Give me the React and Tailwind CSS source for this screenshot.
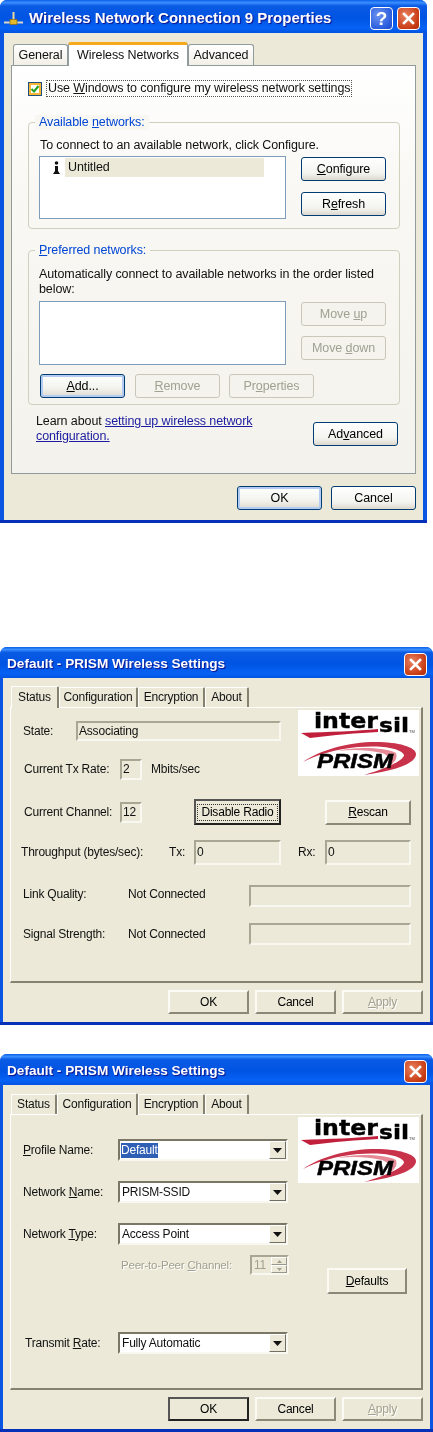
import React from "react";

const XpBtn = ({ w = "w-[85px]", kind = "normal", children }) => {
  const cls =
    kind === "disabled"
      ? "border-[#c9c7ba] bg-[#f4f3ee] text-[#a1a192]"
      : kind === "default"
      ? "border-[#003c74] bg-[linear-gradient(#fff,#f3f3ee_60%,#dcd8ce)] text-black shadow-[inset_0_0_0_2px_#b5ccf2]"
      : "border-[#003c74] bg-[linear-gradient(#fff,#f3f3ee_70%,#dcd8ce)] text-black";
  return (
    <div className={`${w} h-6 shrink-0 flex items-center justify-center rounded-[3px] border ${cls}`}>
      <span>{children}</span>
    </div>
  );
};

const Group = ({ title, h, children }) => (
  <div className={`relative ml-4 w-[372px] ${h} rounded-[4px] border border-[#d0d0bf]`}>
    <div className="absolute -top-[8px] left-[6px] bg-[#f8f7f2] px-1 leading-[15px] text-[#0046d5]">{title}</div>
    {children}
  </div>
);

const XpCaption = ({ kind, children }) => (
  <div
    className={`w-[23px] h-[23px] rounded-[4px] border border-white flex items-center justify-center ${
      kind === "close"
        ? "bg-[radial-gradient(circle_at_35%_35%,#e9805f,#c83c14_70%,#a92a08)]"
        : "bg-[radial-gradient(circle_at_35%_35%,#6d94f0,#2a5dde_70%,#1a47c8)]"
    }`}
  >
    {children}
  </div>
);

const CloseX = () => (
  <svg width="13" height="13" viewBox="0 0 13 13">
    <path d="M2 2 L11 11 M11 2 L2 11" stroke="#fff" strokeWidth="2.6" strokeLinecap="square" />
  </svg>
);

const TitleBar = ({ children, icon, buttons, h, right }) => (
  <div className={`${h} ${right} shrink-0 flex items-center rounded-t-[7px] bg-[linear-gradient(#0a5fe8_0,#3a8eff_8%,#0a5ae4_18%,#0054e3_55%,#0662f5_85%,#0353e0_100%)] pt-[3px]`}>
    {icon}
    <span className="flex-1 text-white font-bold tracking-normal [font-family:'Liberation_Sans',sans-serif] [text-shadow:1px_1px_1px_#0f1089]">
      {children}
    </span>
    {buttons}
  </div>
);

const Tab = ({ w, h, children, active, classic }) => (
  <div
    className={`${w} ${h} shrink-0 flex items-center justify-center ${
      classic
        ? active
          ? "relative z-10 -mb-px bg-[#ece9d8] border-t border-l border-white border-r-2 border-r-[#85826f] rounded-t-[2px]"
          : "bg-[#ece9d8] border-t border-l border-white border-r-2 border-r-[#85826f] rounded-t-[2px]"
        : active
        ? "relative z-10 -mb-px bg-white border-t-[3px] border-t-[#f5a81c] border-x border-x-[#919b9c] rounded-t-[3px]"
        : "bg-[linear-gradient(#fff,#f1efe6)] border-t border-x border-[#919b9c] rounded-t-[3px]"
    }`}
  >
    {children}
  </div>
);

const Sunken = ({ w, h = "h-[21px]", children }) => (
  <div className={`${w} ${h} shrink-0 border-2 border-t-[#a9a693] border-l-[#a9a693] border-r-[#f8f7f0] border-b-[#f8f7f0] bg-[#ece9d8] flex items-center pl-[1px]`}>
    {children}
  </div>
);

const ClassicBtn = ({ w, h = "h-6", kind, children }) => (
  <div
    className={`${w} ${h} shrink-0 flex items-center justify-center bg-[#ece9d8] ${
      kind === "focus" || kind === "default"
        ? "border-2 border-t-[#555] border-l-[#555] border-r-[#222] border-b-[#222]"
        : "border-2 border-t-[#fbfaf5] border-l-[#fbfaf5] border-r-[#8b8878] border-b-[#8b8878]"
    } ${kind === "disabled" ? "text-[#a3a08e] [text-shadow:1px_1px_0_#fff]" : "text-black"}`}
  >
    {children}
  </div>
);

const Combo = ({ children, sel }) => (
  <div className="w-[170px] h-[22px] shrink-0 border-2 border-t-[#7a7766] border-l-[#7a7766] border-r-[#f8f7f0] border-b-[#f8f7f0] bg-white flex items-center justify-between">
    <span className={`ml-[1px] leading-[15px] ${sel ? "bg-[#2f5fb5] text-white pr-0" : "pl-[1px]"}`}>{children}</span>
    <div className="w-[17px] h-[18px] bg-[#ece9d8] border border-t-white border-l-white border-r-[#716f64] border-b-[#716f64] flex items-center justify-center">
      <svg width="9" height="5" viewBox="0 0 9 5"><path d="M0 0 H9 L4.5 5 Z" fill="#111" /></svg>
    </div>
  </div>
);

const Logo = () => (
  <svg width="121" height="66" viewBox="0 0 121 66" className="block shrink-0 bg-white tracking-normal">
    <path d="M3 23 C30 22 60 21 80 19 L80 22 C60 23 35 25 12 28 Z" fill="#c1203c" />
    <text x="16" y="18" fontFamily="DejaVu Sans" fontWeight="700" fontSize="21" textLength="64" lengthAdjust="spacingAndGlyphs" fill="#000" stroke="#000" strokeWidth=".4">inter</text>
    <text x="81" y="22" fontFamily="DejaVu Sans" fontWeight="700" fontSize="20" textLength="30" lengthAdjust="spacingAndGlyphs" fill="#000" stroke="#000" strokeWidth=".4">sil</text>
    <text x="111" y="23" fontFamily="Liberation Sans" fontSize="4" fill="#444">TM</text>
    <path d="M5 52 C22 40 50 32 78 32 C100 32 118 37 118 44 C118 53 100 60 66 65 C90 58 106 50 106 45 C104 38 82 35 60 37 C38 39 18 45 5 52 Z" fill="#c8324a" />
    <path d="M40 41 C60 36 88 38 98 43 C100 49 96 53 90 57 C93 50 92 46 84 43 C70 40 55 39 40 41 Z" fill="#e58a96" />
    <text x="19" y="58" fontFamily="Liberation Sans" fontWeight="700" fontStyle="italic" fontSize="20" textLength="76" lengthAdjust="spacingAndGlyphs" fill="#000" stroke="#000" strokeWidth=".5">PRISM</text>
  </svg>
);

const NetIcon = () => (
  <svg width="20" height="16" viewBox="0 0 20 16" className="ml-[4px] mr-[5px] shrink-0">
    <path d="M0 12.5 H19" stroke="#d8d8c8" strokeWidth="2" />
    <path d="M9.5 2 V12" stroke="#e8d9a0" strokeWidth="2" />
    <rect x="6" y="9.5" width="7" height="5" fill="#e4b92a" stroke="#8a6c10" strokeWidth=".7" />
  </svg>
);

const Window1 = () => (
  <div className="w-[427px] h-[523px] shrink-0 rounded-t-[7px] bg-[linear-gradient(#0a55e2_calc(100%-3px),#0530b8_calc(100%-3px))] flex flex-col text-[12.5px] tracking-[-0.1px]">
    <TitleBar
      h="h-[33px]"
      right="pr-[7px]"
      icon={<NetIcon />}
      buttons={
        <div className="flex gap-[4px]">
          <XpCaption><span className="text-white font-bold text-[19px] leading-none [font-family:'Liberation_Sans',sans-serif]">?</span></XpCaption>
          <XpCaption kind="close"><CloseX /></XpCaption>
        </div>
      }
    >
      <span className="text-[15px]">Wireless Network Connection 9 Properties</span>
    </TitleBar>
    <div className="mx-[4px] mb-[3px] flex-1 bg-[#ece9d8] pt-[11px] flex flex-col">
      <div className="flex items-end h-[21px] pl-[9px]">
        <Tab w="w-[55px]" h="h-[21px]">General</Tab>
        <Tab w="w-[120px]" h="h-[24px]" active>Wireless Networks</Tab>
        <Tab w="w-[66px]" h="h-[21px]">Advanced</Tab>
      </div>
      <div className="mx-[7px] h-[409px] border border-[#919b9c] bg-[linear-gradient(#fff,#f9f8f4_30%,#f3f2ec)] pt-[14px]">
        <div className="flex items-center h-[17px] ml-4">
          <div className="w-[14px] h-[14px] border border-[#1c5180] bg-white shadow-[inset_0_0_0_2px_#f8b636] flex items-center justify-center">
            <svg width="10" height="10" viewBox="0 0 10 10"><path d="M1.5 5 L4 7.5 L8.5 2" fill="none" stroke="#21a121" strokeWidth="2" /></svg>
          </div>
          <span className="ml-[4px] px-[1px] border border-dotted border-[#555] leading-[15px]">Use <u>W</u>indows to configure my wireless network settings</span>
        </div>
        <div className="mt-[25px]">
          <Group title={<>Available <u>n</u>etworks:</>} h="h-[107px]">
            <div className="pt-[15px] pl-[11px] leading-[15px]">To connect to an available network, click Configure.</div>
            <div className="flex pl-[10px] pt-[3px]">
              <div className="w-[247px] h-[63px] border border-[#7f9db9] bg-white pt-[1px] pl-[25px] pr-[21px]">
                <div className="h-[19px] bg-[#ece9d8] relative flex items-center pl-[3px]">
                  <svg width="9" height="14" viewBox="0 0 9 14" className="absolute -left-[13px] top-[3px]">
                    <circle cx="4.5" cy="2" r="1.8" fill="#111" />
                    <path d="M3 5 H6 V10 L8 13 H1 L3 10 Z" fill="#111" />
                  </svg>
                  Untitled
                </div>
              </div>
              <div className="ml-[15px] pt-[1px] flex flex-col gap-[11px]">
                <XpBtn><u>C</u>onfigure</XpBtn>
                <XpBtn>R<u>e</u>fresh</XpBtn>
              </div>
            </div>
          </Group>
        </div>
        <div className="mt-[21px]">
          <Group title={<><u>P</u>referred networks:</>} h="h-[155px]">
            <div className="pt-[16px] pl-[10px] leading-[15px]">Automatically connect to available networks in the order listed<br />below:</div>
            <div className="flex pl-[10px] pt-[4px]">
              <div className="w-[247px] h-[64px] border border-[#7f9db9] bg-white" />
              <div className="ml-[15px] pt-[1px] flex flex-col gap-[10px]">
                <XpBtn kind="disabled">Move <u>u</u>p</XpBtn>
                <XpBtn kind="disabled">Move <u>d</u>own</XpBtn>
              </div>
            </div>
            <div className="flex pl-[11px] pt-[9px]">
              <XpBtn kind="default"><u>A</u>dd...</XpBtn>
              <div className="ml-[10px]"><XpBtn kind="disabled"><u>R</u>emove</XpBtn></div>
              <div className="ml-[9px]"><XpBtn kind="disabled">Pr<u>o</u>perties</XpBtn></div>
            </div>
          </Group>
        </div>
        <div className="mt-[9px] ml-6 flex">
          <div className="w-[277px] leading-[15px]">
            Learn about <span className="text-[#1c1ca0] underline">setting up wireless network<br />configuration.</span>
          </div>
          <div className="pt-[8px]"><XpBtn>Ad<u>v</u>anced</XpBtn></div>
        </div>
      </div>
      <div className="flex justify-end gap-[9px] pt-[12px] pr-[7px]">
        <XpBtn kind="default">OK</XpBtn>
        <XpBtn>Cancel</XpBtn>
      </div>
    </div>
  </div>
);

const Shell = ({ activeTab, panel, okDefault, mt }) => {
  const tabs = [
    ["Status", activeTab === 0 ? "w-[48px]" : "w-[46px]"],
    ["Configuration", activeTab === 1 ? "w-[81px]" : "w-[79px]"],
    ["Encryption", "w-[67px]"],
    ["About", "w-[44px]"],
  ];
  return (
    <div className={`w-[433px] h-[378px] shrink-0 ${mt} rounded-t-[7px] bg-[linear-gradient(#0a55e2_calc(100%-3px),#0530b8_calc(100%-3px))] flex flex-col text-[12px] tracking-[-0.2px]`}>
      <TitleBar
        h="h-[31px]"
        right="pr-[6px]"
        icon={<div className="w-[7px] shrink-0" />}
        buttons={<XpCaption kind="close"><CloseX /></XpCaption>}
      >
        <span className="text-[13.6px]">Default - PRISM Wireless Settings</span>
      </TitleBar>
      <div className="mx-[3px] mb-[3px] flex-1 bg-[#ece9d8] flex flex-col pt-[9px]">
        <div className="flex items-end h-[20px] pl-[8px]">
          {tabs.map(([t, w], i) => (
            <Tab key={t} w={w} h={i === activeTab ? "h-[22px]" : "h-[20px]"} classic active={i === activeTab}>
              {t}
            </Tab>
          ))}
        </div>
        <div className="mx-[7px] h-[276px] border border-t-white border-l-white border-r-2 border-r-[#85826f] border-b-2 border-b-[#85826f]">
          {panel}
        </div>
        <div className="flex justify-end gap-[6px] pt-[7px] pr-[7px]">
          <ClassicBtn w="w-[81px]" kind={okDefault ? "default" : undefined}>OK</ClassicBtn>
          <ClassicBtn w="w-[81px]">Cancel</ClassicBtn>
          <ClassicBtn w="w-[81px]" kind="disabled"><u>A</u>pply</ClassicBtn>
        </div>
      </div>
    </div>
  );
};

const StatusPanel = () => (
  <div>
    <div className="flex h-[91px]">
      <div className="w-[287px] pt-[13px]">
        <div className="flex items-center">
          <span className="ml-[12px] w-[53px]">State:</span>
          <Sunken w="w-[205px]" h="h-[20px]">Associating</Sunken>
        </div>
        <div className="flex items-center mt-[18px]">
          <span className="ml-[13px] w-[96px]">Current Tx Rate:</span>
          <Sunken w="w-[22px]">2</Sunken>
          <span className="ml-[9px]">Mbits/sec</span>
        </div>
      </div>
      <div className="pt-[2px]"><Logo /></div>
    </div>
    <div className="flex items-center h-[26px]">
      <span className="ml-[13px] w-[96px]">Current Channel:</span>
      <Sunken w="w-[22px]">12</Sunken>
      <div className="ml-[52px]">
        <ClassicBtn w="w-[87px]" h="h-[26px]" kind="focus"><span className="border border-dotted border-[#333] px-[3px] leading-[15px] whitespace-nowrap">Disable Radio</span></ClassicBtn>
      </div>
      <div className="ml-[44px]"><ClassicBtn w="w-[86px]" h="h-[25px]"><u>R</u>escan</ClassicBtn></div>
    </div>
    <div className="flex items-center h-[25px] mt-[15px]">
      <span className="ml-[10px] w-[148px]">Throughput (bytes/sec):</span>
      <span className="w-[25px]">Tx:</span>
      <Sunken w="w-[87px]" h="h-[25px]">0</Sunken>
      <span className="ml-[17px] w-[27px]">Rx:</span>
      <Sunken w="w-[86px]" h="h-[25px]">0</Sunken>
    </div>
    <div className="flex items-center h-[22px] mt-[20px]">
      <span className="ml-[12px] w-[105px] mb-[4px]">Link Quality:</span>
      <span className="w-[121px] mb-[4px]">Not Connected</span>
      <Sunken w="w-[162px]" h="h-[22px]" />
    </div>
    <div className="flex items-center h-[22px] mt-[16px]">
      <span className="ml-[12px] w-[105px]">Signal Strength:</span>
      <span className="w-[121px]">Not Connected</span>
      <Sunken w="w-[162px]" h="h-[22px]" />
    </div>
  </div>
);

const ConfigRow = ({ label, pl = "pl-[12px]", w = "w-[95px]", children, sel, mt }) => (
  <div className={`flex items-center ${mt} ${pl}`}>
    <span className={w}>{label}</span>
    <Combo sel={sel}>{children}</Combo>
  </div>
);

const ConfigPanel = () => (
  <div className="flex h-full">
    <div className="w-[287px] pt-[24px]">
      <ConfigRow label={<><u>P</u>rofile Name:</>} sel>Default</ConfigRow>
      <ConfigRow label={<>Network <u>N</u>ame:</>} mt="mt-[20px]">PRISM-SSID</ConfigRow>
      <ConfigRow label={<>Network <u>T</u>ype:</>} mt="mt-[20px]">Access Point</ConfigRow>
      <div className="flex items-center mt-[10px] pl-[110px]">
        <span className="w-[129px] text-[#a3a08e] text-[11.5px] [text-shadow:1px_1px_0_#fff]">Peer-to-Peer <u>C</u>hannel:</span>
        <div className="w-[39px] h-[20px] border-2 border-t-[#a9a693] border-l-[#a9a693] border-r-[#f8f7f0] border-b-[#f8f7f0] flex items-center justify-between pl-[2px] text-[#a3a08e]">
          11
          <div className="w-[16px] h-full flex flex-col">
            <div className="flex-1 border border-t-white border-l-white border-r-[#99968a] border-b-[#99968a] flex items-center justify-center">
              <svg width="5" height="3" viewBox="0 0 5 3"><path d="M0 3 H5 L2.5 0 Z" fill="#a3a08e" /></svg>
            </div>
            <div className="flex-1 border border-t-white border-l-white border-r-[#99968a] border-b-[#99968a] flex items-center justify-center">
              <svg width="5" height="3" viewBox="0 0 5 3"><path d="M0 0 H5 L2.5 3 Z" fill="#a3a08e" /></svg>
            </div>
          </div>
        </div>
      </div>
      <ConfigRow label={<>Transmit <u>R</u>ate:</>} pl="pl-[14px]" w="w-[93px]" mt="mt-[57px]">Fully Automatic</ConfigRow>
    </div>
    <div className="pt-[2px]">
      <Logo />
      <div className="mt-[85px] ml-[29px]">
        <ClassicBtn w="w-[80px]" h="h-[26px]"><u>D</u>efaults</ClassicBtn>
      </div>
    </div>
  </div>
);

export default function App() {
  return (
    <div className="w-[433px] h-[1432px] overflow-hidden bg-white leading-[15px] text-[#111] [font-family:'Liberation_Sans',sans-serif] flex flex-col blur-[0.35px]">
      <Window1 />
      <Shell mt="mt-[124px]" activeTab={0} panel={<StatusPanel />} />
      <Shell mt="mt-[29px]" activeTab={1} panel={<ConfigPanel />} okDefault />
    </div>
  );
}
